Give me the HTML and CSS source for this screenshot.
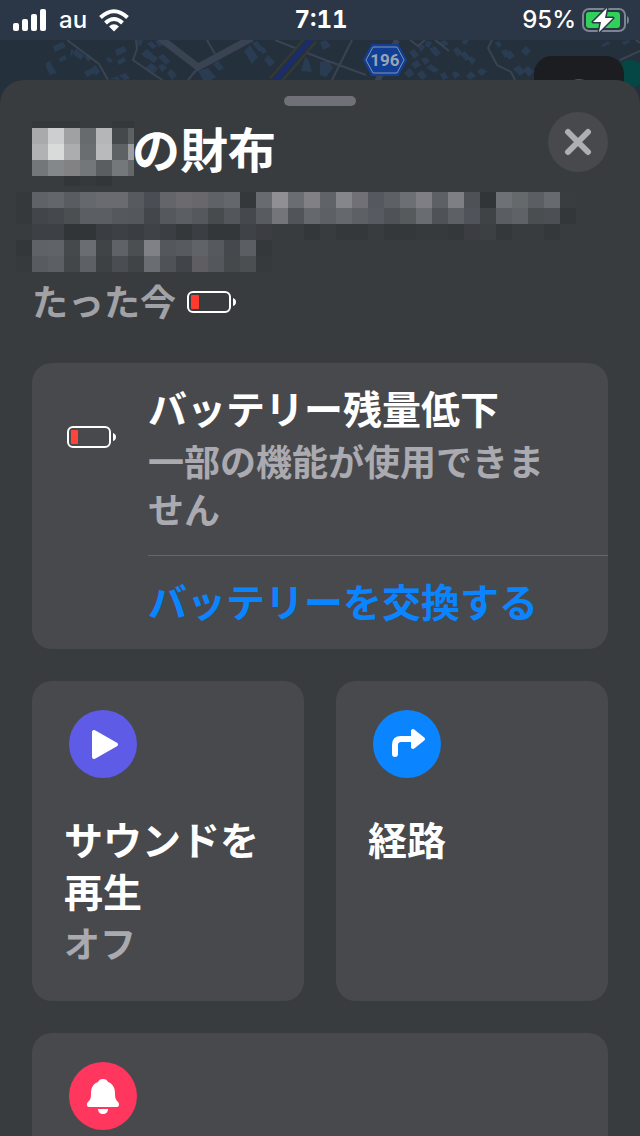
FILE: index.html
```html
<!DOCTYPE html>
<html lang="ja">
<head>
<meta charset="utf-8">
<meta name="viewport" content="width=device-width, initial-scale=1">
<title>の財布</title>
<link rel="stylesheet" href="styles.css">
</head>
<body>
<svg class="map" viewBox="0 40 640 80" preserveAspectRatio="xMidYMin slice" aria-hidden="true">
  <rect y="40" width="640" height="80" fill="#25303d"/>
  <g fill="#2a3c52">
    <path d="M53 46l10-4 3 5-11 5zM46 63l4-2 3 6 4 6-7 2-4-8zM58 59l7-4 2 4-6 3zM71 49l3 2-4 7zM76 49l8 6-3 5-8-6zM84 56l4-2 4 4-4 4zM84 72l8-4 3 5-8 4zM91 69l4-4 5 6-4 5zM115 50l9-4 3 5-10 5zM117 61l7-4 2 4-7 4zM106 59l3-2 4 4-3 2zM109 79l9-3 2 4zM119 75l7-2 4 6-6 1zM138 40h5l-2 6-4-1zM147 44l4-3 6 5-4 3zM155 41l4-1 5 5-5 2zM141 54l6-5 5 4-5 6zM151 53l7 5-4 5-7-5zM158 57l5-3 7 7-4 4zM146 67l5-4 7 5-5 7-6-4zM158 66l5-2 4 4-5 4zM167 73l4-4 6 6-5 5zM198 71l10-3 8 9-5 3h-8zM213 64l5-3 6 7-5 3zM244 51l6-6 8 12-6 7zM252 43l5-2 6 7-4 4zM260 49l4-2 3 5-5 2zM264 60l4-5 7 7-5 5zM305 57l3 2 4 13-11-1zM320 42l6-2 5 6-8 4zM320 62l8-2 5 8-7 9-6-2z"/>
    <path d="M409 52l5-3 5 6-5 4zM417 46l4-3 4 4-4 5zM426 41l6 1-3 6-4-2zM439 42l6-2 4 4-6 3zM411 64l6-4 4 5-6 4zM421 59l5-2 4 4-5 4zM426 68l5-4 8 6-4 3zM404 73l6-5 4 6-5 4zM417 74l5-4 5 6-5 4zM429 49l6-3 6 7-5 4zM453 50l4-3 5 5-4 5zM460 54l5-3 6 8-5 2zM468 59l3-3 5 4-4 5zM463 40h6l-3 5-4-2zM440 74l5-2 3 6-5 2zM452 73l4-2 4 4-5 4zM466 76l5-5 5 5-6 4zM477 72l4-4 6 3-5 5zM501 51l5-2 4 5-5 4zM505 54l5-4 5 6-6 4zM521 51l5-5 5 5-5 5zM513 69l6-4 6 7-5 4zM523 70l5-4 6 5-5 6zM495 43l4-2 3 4-4 3zM601 45l7-4 2 3-7 3zM622 42l6-2 2 2-6 3z"/>
  </g>
  <g fill="none" stroke="#3a4352" stroke-width="2">
    <path d="M67 40l32 24 9 16M136 40l1 9-4 11 32 22M207 40l8 14M198 68l-10 12M275 40l45 18 46 17M352 40l-20 40M410 40l8 6 7-6M435 40l14 11M492 40l-4 8 9 17 14 7 4 8M620 60l20-9M636 40l4 3"/>
    <path d="M160 38l38 29 54-29" stroke-width="7"/>
    <path d="M397 40l-20 42" stroke-width="6"/>
  </g>
  <path d="M312 38l-38 44" stroke="#343b32" stroke-width="13"/>
  <path d="M312 38l-38 44" stroke="#263041" stroke-width="9"/>
  <path d="M312 38l-38 44" stroke="#1b2c6b" stroke-width="5"/>
  <path d="M372 45h26l8 15-8 15h-26l-8-15z" fill="#103f95" stroke="#103f95" stroke-width="2" stroke-linejoin="round"/>
  <path d="M373 47h24l7 13-7 13h-24l-7-13z" fill="#103f95" stroke="#8994aa" stroke-width="1"/>
  <text x="385" y="66" class="route-number">196</text>
  <circle cx="630" cy="74" r="14" fill="#044744"/>
  <rect x="534" y="56" width="90" height="70" rx="18" fill="#1b1d20"/>
  <ellipse cx="579" cy="83" rx="8" ry="4" fill="#185ca8"/>
</svg>

<header class="status">
  <div class="status-left">
    <svg width="34" height="22" viewBox="0 0 34 22" fill="#fff" aria-hidden="true">
      <rect x="0" y="14" width="6" height="8" rx="2"/><rect x="9" y="10" width="6" height="12" rx="2"/><rect x="18" y="5" width="6" height="17" rx="2"/><rect x="27" y="0" width="6" height="22" rx="2"/>
    </svg>
    <span>au</span>
    <svg width="30" height="23" viewBox="0 0 30 23" aria-hidden="true">
      <g fill="none" stroke="#fff" stroke-width="4"><path d="M1.500 8.500Q15-4 28.500 8.500"/><path d="M6.500 14Q15 6 23.500 14"/></g>
      <path d="M10 17.500Q15 13 20 17.500L15 22.500z" fill="#fff"/>
    </svg>
  </div>
  <time class="clock">7:11</time>
  <div class="status-right">
    <span>95%</span>
    <svg width="48" height="26" viewBox="0 0 48 26" aria-hidden="true">
      <rect x="2" y="2" width="42" height="22" rx="6" fill="none" stroke="#7d8590" stroke-width="2"/>
      <path d="M46 9q2 1 2 4t-2 4z" fill="#7d8590"/>
      <rect x="5" y="5" width="34" height="16" rx="3" fill="#30d158"/>
      <path d="M26 1L12 15h8l-2 10L32 11h-8z" fill="#fff" stroke="#2b3647" stroke-width="3" stroke-linejoin="round" paint-order="stroke"/>
    </svg>
  </div>
</header>

<main class="sheet">
  <div class="handle"></div>
  <div class="sheet-head">
    <h1 class="title">
      <svg class="mosaic" id="mosaic-name" width="100" height="72" viewBox="32 112 100 72" aria-hidden="true"></svg>
      <span>の財布</span>
    </h1>
    <button class="close" type="button" aria-label="閉じる">
      <svg width="28" height="28" viewBox="0 0 28 28" aria-hidden="true"><path d="M4 4l20 20M24 4L4 24" stroke="#aeaeb5" stroke-width="6" stroke-linecap="round"/></svg>
    </button>
  </div>
  <svg class="mosaic" id="mosaic-address" width="576" height="96" viewBox="32 184 576 96" aria-hidden="true"></svg>
  <p class="updated">
    <span>たった今</span>
    <svg width="50" height="22" viewBox="0 0 50 22" aria-hidden="true"><rect x="1" y="1" width="42" height="20" rx="5" fill="none" stroke="#fff" stroke-width="2"/><rect x="4" y="4" width="8" height="14" rx="1" fill="#ff3b30"/><path d="M46 7q3 1 3 4t-3 4z" fill="#fff"/></svg>
  </p>

  <section class="card alert">
    <div class="alert-icon">
      <svg width="50" height="22" viewBox="0 0 50 22" aria-hidden="true"><rect x="1" y="1" width="42" height="20" rx="5" fill="none" stroke="#fff" stroke-width="2"/><rect x="4" y="4" width="7" height="14" rx="1" fill="#ff453a"/><path d="M46 7q3 1 3 4t-3 4z" fill="#fff"/></svg>
    </div>
    <div class="alert-body">
      <div class="alert-text">
        <h2>バッテリー残量低下</h2>
        <p>一部の機能が使用できません</p>
      </div>
      <button class="replace" type="button">バッテリーを交換する</button>
    </div>
  </section>

  <div class="tiles">
    <button class="card tile" type="button">
      <svg class="tile-icon" viewBox="0 0 68 68" aria-hidden="true"><circle cx="34" cy="34" r="34" fill="#5e5ce6"/><path d="M25 22v25l22-12.500z" fill="#fff" stroke="#fff" stroke-width="4" stroke-linejoin="round"/></svg>
      <span class="tile-title">サウンドを<br>再生</span>
      <span class="tile-note">オフ</span>
    </button>
    <button class="card tile" type="button">
      <svg class="tile-icon" viewBox="0 0 68 68" aria-hidden="true"><circle cx="34" cy="34" r="34" fill="#0a84ff"/><path d="M22 44V35q0-6 6-6h13" fill="none" stroke="#fff" stroke-width="6" stroke-linecap="round"/><path d="M40 21v16l10-8z" fill="#fff" stroke="#fff" stroke-width="4" stroke-linejoin="round"/></svg>
      <span class="tile-title">経路</span>
    </button>
  </div>

  <section class="card tile">
    <svg class="tile-icon" viewBox="0 0 68 68" role="img" aria-label="通知"><circle cx="34" cy="34" r="34" fill="#ff375f"/><path d="M34 17c3 0 4 1 5 3 5 2 7 6 7 11 0 6 1 7 3 9 2 2 1 5-1 5H20c-2 0-3-3-1-5 2-2 3-3 3-9 0-5 2-9 7-11 1-2 2-3 5-3zM29 47h10c0 3-2 5-5 5s-5-2-5-5z" fill="#fff"/></svg>
  </section>
</main>
<script src="mosaic.js"></script>
</body>
</html>
```

FILE: styles.css
```css
* {
  box-sizing: border-box;
}

body {
  margin: 0;
  height: 100vh;
  overflow: hidden;
  display: flex;
  flex-direction: column;
  position: relative;
  background: #2b3647;
  color: #fff;
  font-family: "Noto Sans CJK JP", sans-serif;
}

h1, h2, p {
  margin: 0;
}

button {
  border: 0;
  padding: 0;
  color: inherit;
  font: inherit;
  text-align: left;
  cursor: pointer;
}

svg {
  flex: none;
}

.map {
  position: absolute;
  top: 40px;
  left: 0;
  width: 100%;
  height: 80px;
}

.route-number {
  font: 700 17px Roboto, sans-serif;
  fill: #98a3b4;
  text-anchor: middle;
}

.status {
  flex: none;
  height: 40px;
  display: grid;
  grid-template-columns: 1fr auto 1fr;
  align-items: center;
  padding: 0 11px 0 13px;
  background: #2b3647;
  font: 500 24px/40px Inter, sans-serif;
}

.status-left,
.status-right {
  display: flex;
  align-items: center;
}

.status-left {
  gap: 12px;
}

.status-right {
  justify-content: flex-end;
  gap: 5px;
}

.clock {
  font-weight: 700;
  font-variant-numeric: tabular-nums;
}

.sheet {
  position: relative;
  flex: 1;
  min-height: 0;
  margin-top: 40px;
  padding: 16px 32px 0;
  overflow: hidden;
  border-radius: 24px 24px 0 0;
  background: #393c3f;
}

.handle {
  width: 72px;
  height: 10px;
  margin: 0 auto 6px;
  border-radius: 5px;
  background: #707176;
}

.sheet-head {
  display: flex;
  justify-content: space-between;
  align-items: flex-start;
}

.title {
  display: flex;
  font-size: 48px;
  line-height: 70px;
  font-weight: 700;
}

.mosaic {
  display: block;
  overflow: visible;
}

.close {
  width: 60px;
  height: 60px;
  display: grid;
  place-items: center;
  border-radius: 50%;
  background: #47494d;
}

.updated {
  display: flex;
  align-items: center;
  gap: 11px;
  height: 44px;
  color: #a1a1a8;
  font-size: 36px;
  line-height: 44px;
  font-weight: 700;
}

.updated span {
  padding-bottom: 4px;
}

.card {
  border-radius: 20px;
  background: #48494d;
}

.alert {
  display: grid;
  grid-template-columns: 116px 1fr;
  margin-top: 39px;
}

.alert-icon {
  padding: 63px 0 0 35px;
}

.alert-text {
  display: grid;
  gap: 5px;
  padding: 20px 32px 23px 0;
}

.alert h2 {
  font-size: 39px;
  line-height: 48px;
  font-weight: 700;
}

.alert p {
  color: #aaaab0;
  font-size: 36px;
  line-height: 48px;
  font-weight: 700;
}

.replace {
  width: 100%;
  height: 94px;
  padding-bottom: 5px;
  border-top: 1px solid #65666a;
  background: none;
  color: #0a84ff;
  font-size: 39px;
  font-weight: 700;
}

.tiles {
  display: grid;
  grid-template-columns: 1fr 1fr;
  gap: 32px;
  margin: 32px 0;
}

.tile {
  min-height: 320px;
  display: flex;
  flex-direction: column;
  align-items: flex-start;
  padding: 29px 32px;
}

.tile-icon {
  width: 68px;
  height: 68px;
  margin: 0 0 34px 5px;
}

.tile-title {
  font-size: 39px;
  line-height: 52px;
  font-weight: 700;
}

.tile-note {
  color: #a9a9af;
  font-size: 36px;
  line-height: 52px;
  font-weight: 700;
}
```

FILE: mosaic.js
```js
// Each row: x, y, cell height, then the colours of its 16px cells.
const nameRows = [
  [32, 121, 7, "35383b 35383b 35383b 393c3f 393c3f 35383b 35383b"],
  [32, 128, 16, "a9aaac cdcecf a0a1a3 676b6e b5b6b8 45494c 5d6164"],
  [32, 144, 16, "b1b2b4 d9dada acadaf 6a6e70 b9babc 5e6264 9c9d9f"],
  [32, 160, 16, "747779 85888a 828284 747779 5b5e61 74787a 65686b"],
  [32, 176, 10, "393c3f 393c3f 333639 36393c 333639 393c3f 393c3f"]
];

const addressRows = [
  [16, 192, 16, "36393c 5f6266 63666a 595c60 65686c 696b70 696b70 575a5f 4a4d53 63656a 6c6a6f 69676c 5f6367 64676b 34383b 686b70 8f8f94 6a6d72 808085 606468 85868b 717076 55585e 5d6065 6c7074 7e7e84 5d6166 7e7f84 4e5257 313538 6e7276 65696c 5b5e62 676b6f 3a3d40"],
  [16, 208, 16, "36393c 424549 45484d 4c4f52 5b5e62 5b5e62 55585c 54575c 43464b 55585d 5b5e62 55585d 474b4e 53565b 45494d 585b60 73757a 51555a 65696d 5d6166 65686d 5d6166 575a60 4f5358 565a5c 696d71 4f5358 5d6166 50545a 3f4346 5a5e62 5f6367 4a4e51 4c5054 34373a"],
  [32, 224, 16, "3d4044 3d4044 323538 323538 3a3d42 3d4145 3a3e42 3f4246 3b3e42 35383b 3b3e42 34373a 34373a 3f4347 3b3d42 393c3f 393c3f 34373a 393c3f 35383b 35383b 393c3f 35383b 35383b 373a3d 373a3d 35383b 3b3d42 3d4043 35383b 393c3f 393c3f 35383b"],
  [16, 240, 16, "34373a 5f6266 606367 45494c 6a6d72 404447 5f6266 4b4f52 808186 54575c 575a5f 606367 565a5e 45484d 5b5f64 35383b"],
  [16, 256, 16, "373a3d 585b60 5c5f63 43474a 5d6065 3d4144 4a4d52 404447 6a6d72 4f5257 414549 5f5d62 54575c 45494c 4b4f52 373a3d"]
];

function drawMosaic(id, rows, rightEdge) {
  const svg = document.getElementById(id);
  for (const [left, top, height, colours] of rows) {
    colours.split(" ").forEach((colour, i) => {
      const x = left + i * 16;
      const cell = document.createElementNS("http://www.w3.org/2000/svg", "rect");
      cell.setAttribute("x", x);
      cell.setAttribute("y", top);
      cell.setAttribute("width", Math.min(16, rightEdge - x));
      cell.setAttribute("height", height);
      cell.setAttribute("fill", "#" + colour);
      cell.setAttribute("shape-rendering", "crispEdges");
      svg.append(cell);
    });
  }
}

drawMosaic("mosaic-name", nameRows, 134);
drawMosaic("mosaic-address", addressRows, 608);
```
